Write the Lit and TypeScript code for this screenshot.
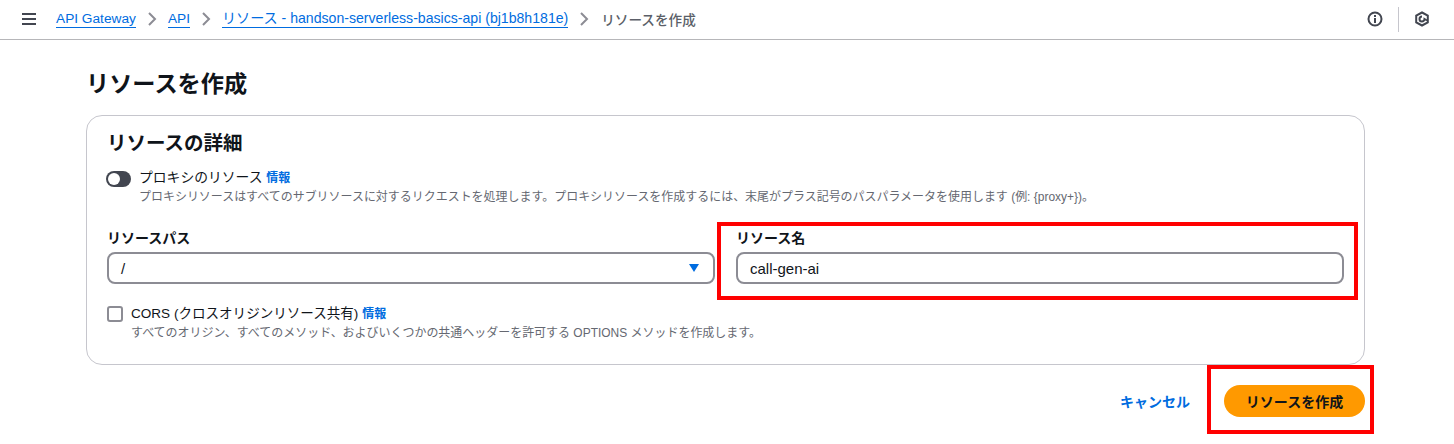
import { css, html, LitElement } from "lit";
import { customElement } from "lit/decorators.js";

@customElement("app-root")
export class AppRoot extends LitElement {
  static styles = css`
    :host {
      display: block;
      position: relative;
      width: 1454px;
      height: 444px;
      overflow: hidden;
      background: #fff;
      color: #0f141a;
      font-family: "Liberation Sans", "Noto Sans CJK JP", sans-serif;
    }
    a {
      color: #006ce0;
      text-decoration: none;
    }
    .topbar {
      height: 40px;
      box-sizing: border-box;
      border-bottom: 1px solid #b6b6b9;
      display: flex;
      align-items: center;
      padding: 0 24px 1px 22px;
      font-size: 14px;
    }
    .menu {
      width: 14px;
      height: 14px;
      margin-right: 20px;
    }
    .crumbs {
      display: flex;
      align-items: center;
      flex: 1;
    }
    .crumbs a {
      border-bottom: 1px solid #006ce0;
      line-height: 17px;
      font-size: 13.7px;
    }
    .crumbs a.long {
      font-size: 14.1px;
    }
    .sep {
      width: 10px;
      height: 14px;
      margin: 0 11px;
    }
    .current {
      color: #5b5f68;
      font-weight: 500;
      font-size: 13.6px;
      margin-left: 1px;
    }
    .tools {
      display: flex;
      align-items: center;
    }
    .tools svg {
      width: 16px;
      height: 16px;
      display: block;
    }
    .divider {
      width: 1px;
      height: 25px;
      background: #c6c6cd;
      margin: 0 15px;
    }
    main {
      padding: 29px 89px 0 86px;
    }
    h1 {
      margin: 0 0 15px;
      font-size: 23.2px;
      line-height: 31px;
      font-weight: 700;
    }
    .card {
      height: 250px;
      box-sizing: border-box;
      border: 1px solid #c6c6cd;
      border-radius: 16px;
      padding: 15px 20px 0 20px;
    }
    h2 {
      margin: 0 0 12px;
      font-size: 19.5px;
      line-height: 25px;
      font-weight: 700;
    }
    .option {
      display: flex;
      gap: 8px;
    }
    .option-text {
      font-size: 13.8px;
      line-height: 20px;
    }
    .option-text a {
      font-size: 12px;
      line-height: 1;
      font-weight: 700;
    }
    .hint {
      color: #656871;
      font-size: 11.97px;
      line-height: 18px;
    }
    .toggle {
      position: relative;
      width: 25px;
      height: 16px;
      border-radius: 8px;
      background: #424650;
      margin: 3px 0 0 -1px;
      flex: none;
    }
    .knob {
      position: absolute;
      left: 2px;
      top: 2px;
      width: 12px;
      height: 12px;
      border-radius: 50%;
      background: #fff;
    }
    .fields {
      display: grid;
      grid-template-columns: 608px 608px;
      gap: 21px;
      margin-top: 24px;
    }
    label {
      display: block;
      font-size: 14px;
      line-height: 17px;
      font-weight: 700;
      margin-bottom: 5px;
    }
    .box {
      height: 32px;
      box-sizing: border-box;
      border: 2px solid #8c8c94;
      border-radius: 8px;
      display: flex;
      align-items: center;
      justify-content: space-between;
      padding: 0 14px 0 12px;
      font-size: 15px;
    }
    .caret {
      width: 0;
      height: 0;
      border-left: 5.5px solid transparent;
      border-right: 5.5px solid transparent;
      border-top: 8px solid #006ce0;
    }
    .cors {
      margin-top: 20px;
    }
    .cors-label {
      font-size: 13.55px;
    }
    .check {
      width: 12px;
      height: 12px;
      border: 2px solid #8c8c94;
      border-radius: 3px;
      margin-top: 2px;
      flex: none;
    }
    .actions {
      display: flex;
      justify-content: flex-end;
      align-items: center;
      gap: 34px;
      margin-top: 20px;
    }
    .cancel {
      font-size: 14px;
      font-weight: 700;
    }
    .primary {
      width: 141px;
      height: 32px;
      border-radius: 16px;
      background: #ff9900;
      display: flex;
      align-items: center;
      justify-content: center;
      font-size: 14px;
      font-weight: 700;
    }
    .mark {
      position: absolute;
      box-sizing: border-box;
      border: 4px solid #ff0000;
    }
    .mark-name {
      left: 717px;
      top: 222px;
      width: 641px;
      height: 78px;
    }
    .mark-submit {
      left: 1207px;
      top: 365px;
      width: 167px;
      height: 69px;
    }
  `;

  render() {
    return html`
      <header class="topbar">
        <svg class="menu" viewBox="0 0 14 14" fill="none" stroke="#424650" stroke-width="2">
          <path d="M0 2h14M0 7h14M0 12h14"></path>
        </svg>
        <nav class="crumbs">
          <a href="#">API Gateway</a>
          ${this.sep()}
          <a href="#">API</a>
          ${this.sep()}
          <a class="long" href="#">リソース - handson-serverless-basics-api (bj1b8h181e)</a>
          ${this.sep()}
          <span class="current">リソースを作成</span>
        </nav>
        <div class="tools">
          <svg viewBox="0 0 16 16" fill="none" stroke="#424650" stroke-width="2">
            <circle cx="8" cy="8" r="6.5"></circle>
            <path d="M8 7v5M8 4v2"></path>
          </svg>
          <div class="divider"></div>
          <svg viewBox="0 0 16 16" fill="none" stroke="#424650" stroke-width="2">
            <path d="M8 1.5l5.8 3.2v6.6L8 14.5l-5.8-3.2V4.7z"></path>
            <path d="M8 5.5a2.5 2.5 0 1 0 2.5 2.5L13 9.5"></path>
          </svg>
        </div>
      </header>
      <main>
        <h1>リソースを作成</h1>
        <section class="card">
          <h2>リソースの詳細</h2>
          <div class="option">
            <div class="toggle"><div class="knob"></div></div>
            <div class="option-text">
              <div>プロキシのリソース <a href="#">情報</a></div>
              <div class="hint">
                プロキシリソースはすべてのサブリソースに対するリクエストを処理します。プロキシリソースを作成するには、末尾がプラス記号のパスパラメータを使用します (例: {proxy+})。
              </div>
            </div>
          </div>
          <div class="fields">
            <div>
              <label>リソースパス</label>
              <div class="box"><span>/</span><span class="caret"></span></div>
            </div>
            <div>
              <label>リソース名</label>
              <div class="box"><span>call-gen-ai</span></div>
            </div>
          </div>
          <div class="option cors">
            <div class="check"></div>
            <div class="option-text">
              <div><span class="cors-label">CORS (クロスオリジンリソース共有)</span> <a href="#">情報</a></div>
              <div class="hint">
                すべてのオリジン、すべてのメソッド、およびいくつかの共通ヘッダーを許可する OPTIONS メソッドを作成します。
              </div>
            </div>
          </div>
        </section>
        <div class="actions">
          <a class="cancel" href="#">キャンセル</a>
          <div class="primary">リソースを作成</div>
        </div>
      </main>
      <div class="mark mark-name"></div>
      <div class="mark mark-submit"></div>
    `;
  }

  sep() {
    return html`<svg class="sep" viewBox="0 0 10 14" fill="none" stroke="#8c8c94" stroke-width="2">
      <path d="M2 1l6 6-6 6"></path>
    </svg>`;
  }
}
